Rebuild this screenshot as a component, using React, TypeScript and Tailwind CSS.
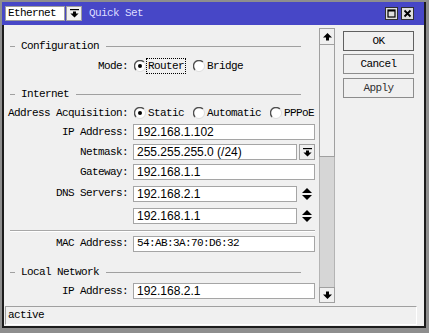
import React from "react";

const sans = "font-['Liberation_Sans',Arial,sans-serif] text-[12px] tracking-normal";

function Radio({ checked }: { checked?: boolean }) {
  return (
    <svg width="12" height="12" viewBox="0 0 12 12" className="shrink-0">
      <circle cx="6" cy="6" r="5.5" fill="#fff" />
      <path d="M9.9 2.1 A5.5 5.5 0 0 0 2.1 9.9" stroke="#505050" strokeWidth="1.4" fill="none" />
      <path d="M2.1 9.9 A5.5 5.5 0 0 0 9.9 2.1" stroke="#dcdcdc" strokeWidth="1" fill="none" />
      {checked && <circle cx="6" cy="6" r="2" fill="#000" />}
    </svg>
  );
}

function Option({ text, checked, focus, className = "" }: { text: string; checked?: boolean; focus?: boolean; className?: string }) {
  return (
    <span className={`flex items-center whitespace-nowrap ${className}`}>
      <Radio checked={checked} />
      <span
        className={`border px-[1px] leading-[14px] ${focus ? "border-dotted border-black" : "border-transparent"}`}
      >
        {text}
      </span>
    </span>
  );
}

function DropIcon() {
  return (
    <svg width="9" height="9" viewBox="0 0 9 9">
      <rect x="0" y="0" width="9" height="1.2" fill="#000" />
      <path d="M3 2.4h3v2h2.6L4.5 8.6 0.4 4.4H3z" fill="#000" />
    </svg>
  );
}

function Header({ title, className = "" }: { title: string; className?: string }) {
  return (
    <div className={`flex items-center pl-[6px] pr-[14px] ${className}`}>
      <span className="h-px w-[5px] bg-[#a0a0a0]" />
      <span className="ml-[6px] whitespace-nowrap">{title}</span>
      <span className="ml-[7px] h-px flex-1 bg-[#a0a0a0]" />
    </div>
  );
}

function Label({ children }: { children: string }) {
  return <span className="flex w-[122px] shrink-0 justify-end whitespace-nowrap">{children}</span>;
}

function Field({ value, width = "w-[182px]", mono }: { value: string; width?: string; mono?: boolean }) {
  return (
    <div
      className={`ml-[5px] flex h-[16px] ${width} items-center whitespace-nowrap border border-[#a5a5a5] bg-white pl-[3px] ${mono ? "" : sans}`}
    >
      {value}
    </div>
  );
}

function Row({ label, className = "", children }: { label: string; className?: string; children: React.ReactNode }) {
  return (
    <div className={`flex items-center pl-[2px] ${className}`}>
      <Label>{label}</Label>
      {children}
    </div>
  );
}

function Spinner() {
  return (
    <svg width="10" height="12" viewBox="0 0 10 12" className="ml-[5px]">
      <path d="M0 5 L5 0 L10 5Z" fill="#000" />
      <path d="M0 7 L10 7 L5 12Z" fill="#000" />
    </svg>
  );
}

export default function App() {
  return (
    <div className="flex h-[333px] w-[429px] flex-col bg-[#8e8e8e] pb-[5px] pl-[2px] pr-[3px] pt-[2px] font-['Liberation_Mono',monospace] text-[11px] tracking-[-0.6px] text-black">
      <div className="flex h-[23px] shrink-0 items-center border-r-2 border-[#1c1c1c] bg-[#4747c7] pl-[3px] pr-[10px]">
        <div className="flex h-[15px] w-[60px] items-center border border-[#9c9c9c] bg-white pl-[2px]">Ethernet</div>
        <div className="ml-[1px] flex h-[15px] w-[16px] items-center justify-center border border-[#9c9c9c] bg-[#f0f0f0]">
          <DropIcon />
        </div>
        <span className="ml-[7px] text-[#dcdcff]">Quick Set</span>
        <div className="ml-auto flex gap-[3px]">
          <svg width="13" height="13" viewBox="0 0 13 13">
            <rect x="0.5" y="0.5" width="12" height="12" fill="#dedede" stroke="#303030" />
            <rect x="3" y="3" width="7" height="7" fill="none" stroke="#000" strokeWidth="1.2" />
            <rect x="3" y="3" width="7" height="1.5" fill="#000" />
          </svg>
          <svg width="13" height="13" viewBox="0 0 13 13">
            <rect x="0.5" y="0.5" width="12" height="12" fill="#dedede" stroke="#303030" />
            <path d="M3.5 3.5 L9.5 9.5 M9.5 3.5 L3.5 9.5" stroke="#000" strokeWidth="1.8" />
          </svg>
        </div>
      </div>

      <div className="flex min-h-0 flex-1 flex-col border-2 border-t-0 border-[#1c1c1c] bg-[#f0f0f0] pt-[3px]">
        <div className="flex h-[275px] shrink-0">
          <div className="flex w-[315px] shrink-0 flex-col pr-[4px] pt-[9px]">
            <Header title="Configuration" className="h-[18px]" />
            <Row label="Mode:" className="h-[22px]">
              <Option text="Router" checked focus className="ml-[6px]" />
              <Option text="Bridge" className="ml-[7px]" />
            </Row>
            <Header title="Internet" className="mt-[7px] h-[20px]" />
            <Row label="Address Acquisition:" className="h-[18px]">
              <Option text="Static" checked className="ml-[6px]" />
              <Option text="Automatic" className="ml-[7px]" />
              <Option text="PPPoE" className="ml-[7px]" />
            </Row>
            <Row label="IP Address:" className="h-[20px]">
              <Field value="192.168.1.102" />
            </Row>
            <Row label="Netmask:" className="h-[20px]">
              <Field value="255.255.255.0 (/24)" width="w-[164px]" />
              <div className="ml-[2px] flex h-[16px] w-[16px] items-center justify-center border border-[#a0a0a0] bg-[#f0f0f0]">
                <DropIcon />
              </div>
            </Row>
            <Row label="Gateway:" className="h-[20px]">
              <Field value="192.168.1.1" />
            </Row>
            <Row label="DNS Servers:" className="h-[23px]">
              <Field value="192.168.2.1" width="w-[164px]" />
              <Spinner />
            </Row>
            <Row label="" className="h-[22px]">
              <Field value="192.168.1.1" width="w-[164px]" />
              <Spinner />
            </Row>
            <div className="flex h-[7px] items-center pl-[6px]">
              <div className="h-[2px] flex-1 border-t border-b border-t-[#a8a8a8] border-b-white" />
            </div>
            <Row label="MAC Address:" className="h-[19px]">
              <Field value="54:AB:3A:70:D6:32" mono />
            </Row>
            <Header title="Local Network" className="mt-[9px] h-[20px]" />
            <Row label="IP Address:" className="h-[18px]">
              <Field value="192.168.2.1" />
            </Row>
          </div>

          <div className="flex w-[16px] shrink-0 flex-col">
            <div className="flex h-[17px] items-center justify-center border border-[#a0a0a0] bg-[#f0f0f0]">
              <svg width="9" height="8" viewBox="0 0 9 8">
                <path d="M4.5 0 L9 4.5 H6 V7.5 H3 V4.5 H0 Z" fill="#000" />
              </svg>
            </div>
            <div className="h-[112px] border-x border-b border-[#a0a0a0] bg-[#f0f0f0]" />
            <div className="flex-1 border-x border-[#b4b4b4] bg-[#d6d6d6]" />
            <div className="flex h-[16px] items-center justify-center border border-[#a0a0a0] bg-[#f0f0f0]">
              <svg width="9" height="8" viewBox="0 0 9 8">
                <path d="M4.5 8 L9 3.5 H6 V0.5 H3 V3.5 H0 Z" fill="#000" />
              </svg>
            </div>
          </div>

          <div className="ml-[8px] flex w-[71px] shrink-0 flex-col pt-[3px]">
            <button type="button" className="h-[20px] border border-[#606060] bg-[#f0f0f0]">
              OK
            </button>
            <button type="button" className="mt-[3px] h-[20px] border border-[#8c8c8c] bg-[#f0f0f0]">
              Cancel
            </button>
            <button type="button" className="mt-[4px] h-[20px] border border-[#8c8c8c] bg-[#f0f0f0] text-[#303030]">
              Apply
            </button>
          </div>
        </div>

        <div className="ml-[1px] mt-[3px] flex h-[19px] w-[412px] items-center border border-b-white border-l-[#a0a0a0] border-r-white border-t-[#a0a0a0] pl-[2px]">
          active
        </div>
      </div>
    </div>
  );
}
